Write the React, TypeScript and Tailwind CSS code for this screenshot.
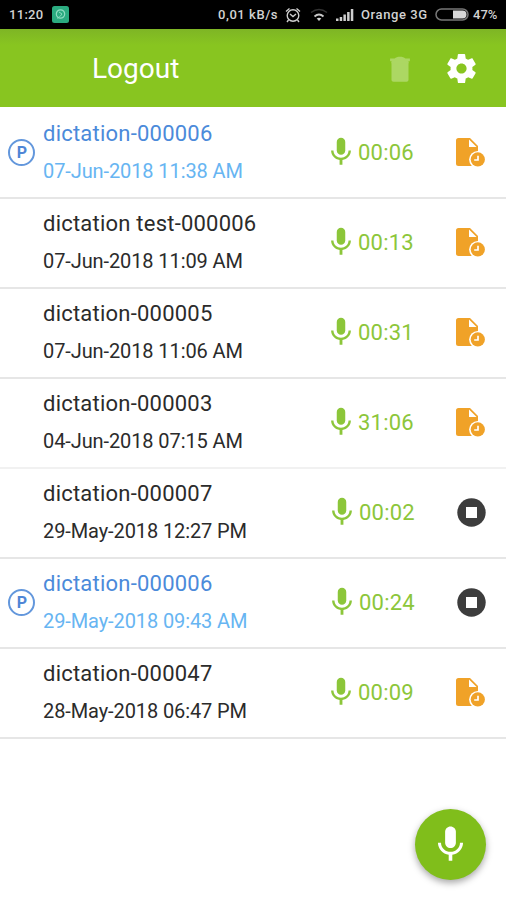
type Dictation = {
    name: string;
    date: string;
    length: string;
    status: 'pending' | 'stopped';
    priority?: boolean;
    endOfGroup?: boolean;
};

const dictations: Dictation[] = [
    { name: 'dictation-000006', date: '07-Jun-2018 11:38 AM', length: '00:06', status: 'pending', priority: true },
    { name: 'dictation test-000006', date: '07-Jun-2018 11:09 AM', length: '00:13', status: 'pending' },
    { name: 'dictation-000005', date: '07-Jun-2018 11:06 AM', length: '00:31', status: 'pending' },
    { name: 'dictation-000003', date: '04-Jun-2018 07:15 AM', length: '31:06', status: 'pending', endOfGroup: true },
    { name: 'dictation-000007', date: '29-May-2018 12:27 PM', length: '00:02', status: 'stopped' },
    { name: 'dictation-000006', date: '29-May-2018 09:43 AM', length: '00:24', status: 'stopped', priority: true },
    { name: 'dictation-000047', date: '28-May-2018 06:47 PM', length: '00:09', status: 'pending' },
];

function MicIcon({ className }: { className?: string }) {
    return (
        <svg viewBox="0 0 24 24" fill="currentColor" className={className}>
            <path d="M12 14c1.66 0 3-1.34 3-3V5c0-1.66-1.34-3-3-3S9 3.34 9 5v6c0 1.66 1.34 3 3 3z" />
            <path d="M17.3 11c0 3-2.54 5.1-5.3 5.1S6.7 14 6.7 11H5c0 3.41 2.72 6.23 6 6.72V21h2v-3.28c3.28-.48 6-3.3 6-6.72h-1.7z" />
        </svg>
    );
}

function FileClockIcon() {
    return (
        <svg viewBox="0 0 30 30" className="size-[30px]">
            <path d="M2.500 1H14l8 8v20H2.500A2.500 2.500 0 0 1 0 26.500v-23A2.500 2.500 0 0 1 2.500 1z" fill="#f0a228" />
            <path d="M13 2.600v7.400h7.600z" fill="#fff" />
            <circle cx="21.800" cy="22.600" r="8.700" fill="#fff" />
            <path d="M14 29h16v1H14z" fill="#fff" />
            <circle cx="21.800" cy="22.400" r="7.100" fill="#f0a228" />
            <path d="M22 18.800v4.200h-3.800" fill="none" stroke="#fff" strokeWidth="1.700" />
        </svg>
    );
}

function StopIcon() {
    return (
        <svg viewBox="0 0 30 30" className="size-[30px]">
            <circle cx="15.500" cy="15.500" r="14.200" fill="#3d3d3d" />
            <rect x="10" y="10" width="11" height="11" fill="#fff" />
        </svg>
    );
}

function StatusBar() {
    return (
        <div className="flex h-[29px] items-center bg-black pr-[8px] pl-[9px] text-[13px] font-medium text-[#d2d2d2]">
            <span className="w-[43px] tracking-[0.3px]">11:20</span>
            <svg viewBox="0 0 17 17" className="size-[17px]">
                <rect width="17" height="17" rx="2.500" fill="#2bab80" />
                <circle cx="8.500" cy="8" r="4.200" fill="none" stroke="#8edcc0" strokeWidth="1.200" />
                <path d="M7 6l3 2-2 2.500M5.500 12.500l2-2" fill="none" stroke="#8edcc0" />
            </svg>
            <span className="ml-auto w-[67px] tracking-[0.55px] whitespace-nowrap">0,01 kB/s</span>
            <svg viewBox="0 0 16 16" className="size-[16px]" fill="none" stroke="#cfcfcf" strokeWidth="1.400">
                <circle cx="8" cy="8.500" r="5.800" />
                <path d="M1 4.500L4.500 1.500M15 4.500L11.500 1.500M5 7l3 2.500L11 7M3.500 13L2 15M12.500 13l1.500 2" />
            </svg>
            <svg viewBox="0 0 18 14" className="ml-[9px] h-[14px] w-[18px]" fill="none">
                <path d="M1 4.500Q9-1.500 17 4.500" stroke="#333" strokeWidth="1.500" />
                <path d="M4.500 8.500Q9 4.500 13.500 8.500" stroke="#c8c8c8" strokeWidth="1.800" />
                <path d="M6.700 10.500Q9 8.800 11.300 10.500L9 13z" fill="#d2d2d2" />
            </svg>
            <svg viewBox="0 0 18 12" className="ml-[8px] h-[12px] w-[18px]" fill="#cecece">
                <path d="M0 9.500h2.500V12H0zM3.700 8h2.500v4H3.700zM7.400 5.500h2.500V12H7.400zM11.100 3h2.500v9h-2.500zM14.800 0h2.500v12h-2.500z" />
            </svg>
            <span className="ml-[7px] w-[74px] tracking-[0.6px] whitespace-nowrap">Orange 3G</span>
            <svg viewBox="0 0 34 13" className="h-[13px] w-[34px]">
                <rect x="1" y="1" width="32" height="11" rx="5.500" fill="none" stroke="#777" strokeWidth="1.500" />
                <path d="M18 2.500h9.500a4 4 0 0 1 0 8H18z" fill="#d8d8d8" />
            </svg>
            <span className="ml-[4px] w-[25px] whitespace-nowrap">47%</span>
        </div>
    );
}

function Toolbar() {
    return (
        <header className="flex h-[78px] items-center bg-[#88c520] bg-linear-to-b from-[#7eb525] to-[#88c520] to-[16px] pt-px pr-[27px] pl-[92px] text-white">
            <span className="pt-px text-[28px] leading-none">Logout</span>
            <svg viewBox="0 0 24 24" className="ml-auto size-[34px] text-[#acd763]" fill="currentColor">
                <path d="M6 19.600c0 .8.600 1.400 1.400 1.400h9.200c.8 0 1.400-.6 1.400-1.400V7H6zM5 6.500h14V4.600h-3.200C15 3.700 13.600 3.300 12 3.300S9 3.700 8.200 4.600H5z" />
                <path d="M6 6h12v2H6z" />
            </svg>
            <svg viewBox="0 0 24 24" className="ml-[27px] size-[35px]" fill="currentColor">
                <path d="M19.430 12.980c.04-.32.070-.64.070-.98s-.03-.66-.07-.98l2.110-1.650c.19-.15.240-.42.120-.64l-2-3.460c-.12-.22-.39-.3-.61-.22l-2.490 1c-.52-.4-1.080-.73-1.690-.98l-.38-2.650C14.460 2.180 14.250 2 14 2h-4c-.25 0-.46.180-.49.420l-.38 2.650c-.61.250-1.170.590-1.690.980l-2.490-1c-.23-.09-.49 0-.61.220l-2 3.460c-.13.220-.07.490.120.640l2.110 1.650c-.04.320-.07.650-.07.980s.030.660.070.980l-2.110 1.650c-.19.150-.24.420-.12.640l2 3.460c.120.220.390.300.610.220l2.490-1c.520.400 1.080.730 1.690.980l.380 2.650c.030.240.240.420.490.420h4c.250 0 .460-.18.490-.42l.380-2.650c.610-.25 1.170-.59 1.690-.98l2.490 1c.230.090.490 0 .610-.22l2-3.460c.120-.22.070-.49-.12-.64l-2.110-1.650zM12 15.500c-1.930 0-3.500-1.570-3.500-3.500s1.570-3.500 3.500-3.500 3.500 1.570 3.500 3.500-1.570 3.500-3.500 3.500z" />
            </svg>
        </header>
    );
}

function DictationRow({ item }: { item: Dictation }) {
    return (
        <li className={`flex h-[90px] items-center border-b-2 pr-[20px] pb-[2px] ${item.endOfGroup ? 'border-[#f1f1f1]' : 'border-[#e6e6e6]'}`}>
            <div className="flex w-[43px] shrink-0 pl-[8px]">
                {item.priority && (
                    <span className="flex size-[27px] items-center justify-center rounded-full border-2 border-[#6397dc] pt-[2px] pl-px text-[16px] font-bold text-[#4f86d6]">
                        P
                    </span>
                )}
            </div>
            <div className="flex-1 whitespace-nowrap">
                <p className={`text-[22px] leading-[38px] tracking-[0.22px] ${item.priority ? 'text-[#4b8ada]' : 'text-[#2b2b2b]'}`}>{item.name}</p>
                <p className={`text-[20px] leading-[37px] tracking-[-0.1px] ${item.priority ? 'text-[#67b5f2]' : 'text-[#2b2b2b]'}`}>{item.date}</p>
            </div>
            <div className={`flex items-center text-[#8cc63a] ${item.status === 'stopped' ? 'w-[131px]' : 'w-[132px]'}`}>
                <MicIcon className="size-[34px]" />
                <span className="pt-px text-[22px] tracking-[0.2px]">{item.length}</span>
            </div>
            {item.status === 'stopped' ? <StopIcon /> : <FileClockIcon />}
        </li>
    );
}

export default function App() {
    return (
        <div className="relative h-[900px] w-full overflow-hidden bg-white font-['Roboto',sans-serif]">
            <StatusBar />
            <Toolbar />
            <ul className="pt-[2px]">
                {dictations.map((item, i) => (
                    <DictationRow key={i} item={item} />
                ))}
            </ul>

            {/* Record button */}
            <button className="absolute right-[20px] bottom-[20px] flex size-[71px] items-center justify-center rounded-full bg-[#80be1b] text-white shadow-[0_3px_7px_rgba(0,0,0,0.35)]">
                <MicIcon className="size-[43px]" />
            </button>
        </div>
    );
}
